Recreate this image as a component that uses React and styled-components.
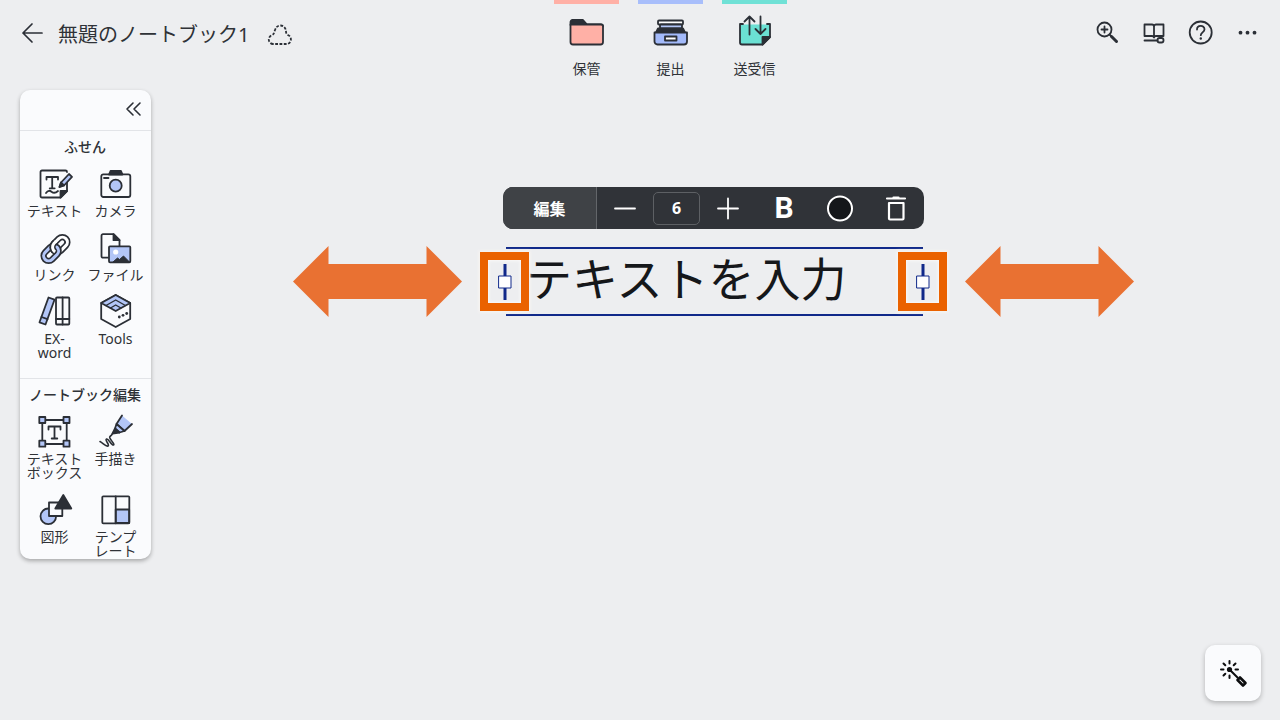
import React from "react";
import styled, { createGlobalStyle, css } from "styled-components";

const INK = "#2b2f36";
const BLUE = "#b3c6f7";
const PAPER = "#fafbfd";

const GlobalStyle = createGlobalStyle`
  *, *::before, *::after { box-sizing: border-box; }
  body {
    margin: 0;
    background: #edeef0;
    color: #2f3237;
    font-family: "Noto Sans", "Noto Sans CJK JP", sans-serif;
  }
  button, input { font: inherit; color: inherit; }
  button { padding: 0; border: 0; background: none; cursor: pointer; }
  svg { display: block; overflow: visible; }
`;

const Page = styled.div`
  display: flex;
  flex-direction: column;
  min-height: 100vh;
`;

const Header = styled.header`
  display: grid;
  grid-template-columns: 554fr auto 493fr;
  height: 90px;
`;

const TitleArea = styled.div`
  display: flex;
  align-items: center;
  height: 70px;
  padding-left: 16px;
`;

const Title = styled.h1`
  margin: 0 15px 0 10px;
  font-size: 20px;
  line-height: 24px;
  font-weight: 400;
  white-space: nowrap;
`;

const IconButton = styled.button`
  display: grid;
  place-items: center;
  width: 32px;
  height: 32px;
`;

const Tabs = styled.nav`
  display: flex;
  gap: 19px;
`;

const Tab = styled.button`
  display: flex;
  flex-direction: column;
  align-items: center;
  width: 65px;
  height: 80px;
  padding-top: 10px;
  border-top: 4px solid ${(p) => p.$color};
  font-size: 14px;
  line-height: 20px;
  white-space: nowrap;
`;

const TabLabel = styled.span`
  margin-top: 9px;
`;

const Actions = styled.div`
  display: flex;
  justify-content: flex-end;
  gap: 15px;
  padding: 17px 16px 0 0;
`;

const Main = styled.main`
  display: flex;
  flex: 1;
  align-items: flex-start;
  padding-left: 20px;
`;

const Palette = styled.aside`
  flex: none;
  width: 131px;
  background: ${PAPER};
  border-radius: 10px;
  box-shadow: 0 2px 4px rgba(0, 0, 0, 0.3);
`;

const PaletteTop = styled.div`
  display: flex;
  justify-content: flex-end;
  padding: 3px 2px 5px;
`;

const Section = styled.section`
  padding: 6px 5px ${(p) => (p.$last ? "1px" : "18px")} 4px;
  border-top: 1px solid #e2e4e8;
`;

const SectionTitle = styled.h2`
  margin: 0 0 11px;
  font-size: 14px;
  line-height: 20px;
  font-weight: 500;
  text-align: center;
  white-space: nowrap;
`;

const ToolGrid = styled.div`
  display: grid;
  grid-template-columns: 1fr 1fr;
  row-gap: 14px;
`;

const Tool = styled.button`
  display: flex;
  flex-direction: column;
  align-items: center;
  gap: 4px;
  font-size: 14px;
  line-height: 14px;
  text-align: center;
  white-space: pre-line;
`;

const Canvas = styled.div`
  display: flex;
  flex: 1;
  flex-direction: column;
  align-items: center;
  gap: 17px;
  padding: 97px 4px 0 0;
`;

const Toolbar = styled.div`
  display: flex;
  align-items: center;
  height: 42px;
  overflow: hidden;
  background: #303338;
  border-radius: 10px;
  color: #fff;
`;

const EditButton = styled.button`
  width: 94px;
  height: 42px;
  background: #3f4246;
  border-right: 1px solid #63666a;
  font-size: 16px;
  font-weight: 700;
`;

const BarButton = styled.button`
  display: grid;
  place-items: center;
  width: 56px;
  height: 42px;
`;

const SizeInput = styled.input`
  width: 47px;
  height: 33px;
  padding: 0;
  background: transparent;
  border: 1px solid #5d6064;
  border-radius: 5px;
  font-size: 16px;
  font-weight: 700;
  text-align: center;
`;

const BoldMark = styled.span`
  font-family: Roboto, "Liberation Sans", sans-serif;
  font-size: 30px;
  line-height: 42px;
  font-weight: 700;
`;

const ObjectRow = styled.div`
  display: flex;
  align-items: center;
  gap: 18px;
`;

const TextFrame = styled.div`
  position: relative;
  width: 467px;
  padding: 0 24px 0 26px;
`;

const TextInput = styled.input`
  display: block;
  width: 100%;
  height: 69px;
  padding: 0 20px 12px 20px;
  background: transparent;
  border: solid #10298a;
  border-width: 2px 0;
  color: #15171a;
  font-size: 46px;
`;

const Handle = styled.span`
  position: absolute;
  top: 5px;
  ${(p) => (p.$side === "left" ? css`left: 0;` : css`right: 0;`)}
  display: grid;
  place-items: center;
  width: 49px;
  height: 59px;
  border: 8px solid #ea6200;
  box-shadow: 0 0 3px 1px #faf6f1, inset 0 0 3px 1px #faf9f8;
`;

const WandButton = styled.button`
  position: fixed;
  right: 19px;
  bottom: 19px;
  display: grid;
  place-items: center;
  width: 56px;
  height: 56px;
  background: ${PAPER};
  border-radius: 10px;
  box-shadow: 0 2px 5px rgba(0, 0, 0, 0.25);
`;

const Svg = ({ w = 32, h = 32, sw = 1.8, color = INK, children }) => (
  <svg
    width={w}
    height={h}
    viewBox={`0 0 ${w} ${h}`}
    fill="none"
    stroke={color}
    strokeWidth={sw}
    strokeLinecap="round"
    strokeLinejoin="round"
    aria-hidden="true"
  >
    {children}
  </svg>
);

const BackIcon = () => (
  <Svg sw={1.7}>
    <path d="M26 14H7M16 5l-9 9 9 9" />
  </Svg>
);

const CloudIcon = () => (
  <Svg w={26} h={26} sw={1.8}>
    <path
      d="M6 22a4.500 4.500 0 0 1-1-8.800C6.500 12.500 7 11.500 7.500 9.500 8.500 5.500 10.500 3.500 13.500 3.500S19 6 19 9.500c0 1.500.5 2.500 2 3.500A4.800 4.800 0 0 1 20.500 22Z"
      strokeDasharray="2.800 1.500"
      strokeLinecap="butt"
    />
  </Svg>
);

const FolderIcon = () => (
  <Svg w={39} h={36}>
    <path d="M3.500 11V8a2 2 0 0 1 2-2h10.500l4 4.500H34a2 2 0 0 1 2 2Z" fill={INK} />
    <path d="M3.500 10.500H34a2 2 0 0 1 2 2V28a2.500 2.500 0 0 1-2.500 2.500H6A2.500 2.500 0 0 1 3.500 28Z" fill="#ffb0a6" />
  </Svg>
);

const TrayIcon = () => (
  <Svg w={39} h={36}>
    <rect x="7" y="6.500" width="25" height="4" rx="1" fill="#fff" />
    <rect x="9" y="10.500" width="22" height="4" rx="1" fill={BLUE} />
    <path d="M7 14.500h25l2 4H5Z" fill={INK} />
    <path d="M3.500 18.500h32.500v9a3 3 0 0 1-3 3H6.500a3 3 0 0 1-3-3Z" fill="#a3bafa" />
    <rect x="14" y="22.500" width="11.500" height="4" fill="#fff" />
  </Svg>
);

const ExchangeIcon = () => (
  <Svg w={39} h={36}>
    <path d="M5 10.500h30V23l-7.500 7.500H7a2 2 0 0 1-2-2Z" fill="#6be0d3" stroke="none" />
    <path d="M8 10H5v18.500a2 2 0 0 0 2 2h20.500L35 23V10h-3" />
    <path d="M27.500 30.500V23H35Z" fill={INK} />
    <path d="M14.500 20.500V2.500M9.500 7.500l5-5 5 5M25.500 2.500V20M20.500 15l5 5 5-5" />
  </Svg>
);

const ZoomInIcon = () => (
  <Svg>
    <circle cx="13.500" cy="12.500" r="7" />
    <path d="M10.500 12.500h6M13.500 9.500v6M18.500 17.500l3 3" />
    <path d="M20.500 19.500l5 5" strokeWidth="3" />
  </Svg>
);

const GuideIcon = () => (
  <Svg>
    <path d="M6.500 7.500H14a2 2 0 0 1 2 2 2 2 0 0 1 2-2h7.500v11.500H18a2 2 0 0 0-2 1.500 2 2 0 0 0-2-1.500H6.500ZM16 9.500v10M6.500 23.500h13" />
    <rect x="19.500" y="21" width="6" height="4.500" rx="2" />
  </Svg>
);

const HelpIcon = () => (
  <Svg>
    <circle cx="15.700" cy="15.500" r="11" />
    <path d="M12 12.500c0-4.800 7.500-4.800 7.500-.3 0 3-3.700 3.300-3.700 6" />
    <circle cx="15.800" cy="21.500" r="1.200" fill={INK} stroke="none" />
  </Svg>
);

const MoreIcon = () => (
  <Svg>
    <g fill={INK} stroke="none">
      <circle cx="8.500" cy="15.700" r="1.900" />
      <circle cx="15.500" cy="15.700" r="1.900" />
      <circle cx="22.500" cy="15.700" r="1.900" />
    </g>
  </Svg>
);

const CollapseIcon = () => (
  <Svg sw={1.600}>
    <path d="M16 10l-6 6 6 6M23 10l-6 6 6 6" />
  </Svg>
);

const NoteIcon = () => (
  <Svg w={41}>
    <path d="M33 9v14l-6.500 6.500H8a1.500 1.500 0 0 1-1.500-1.500V4A1.500 1.500 0 0 1 8 2.500h23.500A1.500 1.500 0 0 1 33 4" />
    <path d="M26.500 29.500v-6.500H33Z" fill={INK} />
    <path d="M12.500 11.500V9h11.500v2.500M18.200 9v11M15.700 20.300h5" />
    <path d="M12 25c2-3 4-2.500 5.500-1.300s4 1.600 6.500-.7" />
    <path d="M25.500 19l1.500-4.500 8-8.500 3 2.800-8 8.700Z" fill={BLUE} />
    <path d="M25.500 19l1.500-4.500 3 3Z" fill={INK} />
  </Svg>
);

const CameraIcon = () => (
  <Svg w={41}>
    <path d="M14 6.500l1.500-3.500h10.500l1.500 3.500Z" fill={INK} />
    <rect x="6.300" y="6.300" width="29" height="22.700" rx="2" />
    <path d="M9 10h4.500" />
    <circle cx="20.700" cy="17.700" r="6" fill={BLUE} />
  </Svg>
);

const LinkIcon = () => (
  <Svg w={41}>
    <g transform="rotate(-45 21.500 17)">
      <rect x="19.200" y="12" width="17" height="10" rx="5" strokeWidth="6.400" />
      <rect x="19.200" y="12" width="17" height="10" rx="5" stroke="#fff" strokeWidth="3" />
      <rect x="6.800" y="12" width="17" height="10" rx="5" strokeWidth="6.400" />
      <rect x="6.800" y="12" width="17" height="10" rx="5" stroke={BLUE} strokeWidth="3" />
      <path d="M19.200 17.500a5 5 0 0 1 5-5.500h2" strokeWidth="6.400" strokeLinecap="butt" />
      <path d="M19.200 18.500a5.500 5.500 0 0 1 5-6.500h3" stroke="#fff" strokeWidth="3" strokeLinecap="butt" />
    </g>
  </Svg>
);

const FileIcon = () => (
  <Svg w={41}>
    <path d="M13 25.700H8a1.500 1.500 0 0 1-1.500-1.500V3.700A1.500 1.500 0 0 1 8 2.200h10.500l6 6V14" />
    <path d="M18.500 2.200v6h6Z" fill={INK} />
    <rect x="14" y="14.300" width="21.300" height="16" rx="1" fill={BLUE} />
    <circle cx="20.700" cy="20" r="2.600" fill="#fff" stroke="none" />
    <path d="M18 30l4.500-4 2 1.500 4-3.500 6 6Z" fill={INK} strokeWidth="1" />
  </Svg>
);

const BooksIcon = () => (
  <Svg w={41}>
    <path d="M14.500 1.500l6 2.200-9 24.800-6-2.200Z" fill={BLUE} />
    <path d="M7.500 21l6 2.200" />
    <rect x="22" y="1.500" width="13.300" height="27" rx="1" />
    <path d="M28.600 1.500v27M22 23h13.300" />
  </Svg>
);

const CubeIcon = () => (
  <Svg w={41}>
    <path d="M20.700-1l14.500 8v16l-14.500 8-14.500-8V7Z" />
    <path d="M20.700-1l14.500 8-14.500 8-14.500-8Z" fill={BLUE} />
    <path d="M11 9.500l9.700-5.500 9.700 5.500M15.500 12l5.200-3 5.200 3" strokeWidth="1.400" />
    <g fill={INK} stroke="none">
      <circle cx="24.300" cy="21" r="1.400" />
      <circle cx="28" cy="19.300" r="1.400" />
      <circle cx="31.700" cy="17.500" r="1.400" />
    </g>
  </Svg>
);

const TextBoxIcon = () => (
  <Svg w={41}>
    <rect x="8.300" y="4" width="24.400" height="24" />
    <g fill={BLUE}>
      <rect x="5.300" y="1" width="6" height="6" />
      <rect x="29.500" y="1" width="6" height="6" />
      <rect x="5.300" y="24.700" width="6" height="6" />
      <rect x="29.500" y="24.700" width="6" height="6" />
    </g>
    <path d="M14.500 13.500v-3h12v3M20.500 10.500v12M17.700 22.500h5.600" />
  </Svg>
);

const DrawIcon = () => (
  <Svg w={41}>
    <path d="M27-.5l10 8.500-7.500 7-8-7Z" fill={BLUE} stroke="none" />
    <path d="M27-.5L21.500 8l8 7 7.500-7" />
    <path d="M21.500 8l-1.500 4.500 4.500 4 5-1.500Z" fill={BLUE} />
    <path d="M20 12.500l-2.500 5 7-1Z" fill={INK} />
    <path d="M5 25.500c3 1.500 6 5.500 8 4.500s-3.500-6-1.500-7 5 7 7 6-5.500-7-3.500-8.500 2-1.500 2.500-3" strokeWidth="1.600" />
  </Svg>
);

const ShapesIcon = () => (
  <Svg w={41}>
    <circle cx="14.300" cy="22.300" r="7.800" fill={BLUE} />
    <rect x="15" y="8.500" width="13.300" height="13.500" fill={PAPER} />
    <path d="M29.300 1l8 13.500h-16Z" fill={INK} />
  </Svg>
);

const TemplateIcon = () => (
  <Svg w={41}>
    <rect x="20.700" y="15.500" width="13.500" height="13.500" fill={BLUE} />
    <rect x="7.300" y="2.300" width="27" height="27" rx="1" />
    <path d="M20.700 2.300v27" />
  </Svg>
);

const MinusIcon = () => (
  <Svg w={24} h={24} color="#fff">
    <path d="M2 12.500h20" />
  </Svg>
);

const PlusIcon = () => (
  <Svg w={24} h={24} color="#fff">
    <path d="M2 12.500h20M12 2.500v20" />
  </Svg>
);

const ColorIcon = () => (
  <Svg w={26} h={26} sw={2} color="#fff">
    <circle cx="13" cy="13.500" r="12" fill="#15171a" />
  </Svg>
);

const TrashIcon = () => (
  <Svg w={24} h={26} sw={2.2} color="#fff">
    <path d="M3 3.500h18M9.500 2.500h5M5 8h14.500v15.500a1 1 0 0 1-1 1H6a1 1 0 0 1-1-1Z" />
  </Svg>
);

const GripIcon = () => (
  <Svg w={15} h={36} sw={3} color="#10298a">
    <path d="M8 0v36" strokeLinecap="butt" />
    <rect x="2" y="12" width="12" height="12" fill="#fff" strokeWidth="1" />
  </Svg>
);

const DoubleArrow = () => (
  <svg width="169" height="71" viewBox="0 0 169 71" aria-hidden="true">
    <path d="M0 35.500L35.500 0v18h98V0L169 35.500 133.500 71V53h-98v18Z" fill="#e97132" />
  </svg>
);

const WandIcon = () => (
  <Svg w={32} h={32} sw={2} color="#0c0d0f">
    <path d="M12.500 4v2.500M12.500 18.500v2.500M4 12.500h2.500M18.500 12.500h2.500M6.500 6.500l1.800 1.800M18.500 6.500l-1.800 1.800M6.500 18.500l1.800-1.800M12.500 12.500l8 8" />
    <circle cx="12.500" cy="12.500" r="2.600" fill="#0c0d0f" stroke="none" />
    <path d="M23 20.500l5.500 5.500-2.500 2.500-5.500-5.500Z" strokeWidth="2.600" />
  </Svg>
);

const tabs = [
  { label: "保管", color: "#ffb0a6", Icon: FolderIcon },
  { label: "提出", color: "#a8befb", Icon: TrayIcon },
  { label: "送受信", color: "#70e1d6", Icon: ExchangeIcon },
];

const actions = [
  { label: "拡大", Icon: ZoomInIcon },
  { label: "表示設定", Icon: GuideIcon },
  { label: "ヘルプ", Icon: HelpIcon },
  { label: "その他", Icon: MoreIcon },
];

const sections = [
  {
    title: "ふせん",
    tools: [
      { label: "テキスト", Icon: NoteIcon },
      { label: "カメラ", Icon: CameraIcon },
      { label: "リンク", Icon: LinkIcon },
      { label: "ファイル", Icon: FileIcon },
      { label: "EX-\nword", Icon: BooksIcon },
      { label: "Tools", Icon: CubeIcon },
    ],
  },
  {
    title: "ノートブック編集",
    tools: [
      { label: "テキスト\nボックス", Icon: TextBoxIcon },
      { label: "手描き", Icon: DrawIcon },
      { label: "図形", Icon: ShapesIcon },
      { label: "テンプ\nレート", Icon: TemplateIcon },
    ],
  },
];

export default function App() {
  return (
    <Page>
      <GlobalStyle />
      <Header>
        <TitleArea>
          <IconButton aria-label="戻る"><BackIcon /></IconButton>
          <Title>無題のノートブック1</Title>
          <IconButton aria-label="同期"><CloudIcon /></IconButton>
        </TitleArea>
        <Tabs>
          {tabs.map(({ label, color, Icon }) => (
            <Tab key={label} $color={color}>
              <Icon />
              <TabLabel>{label}</TabLabel>
            </Tab>
          ))}
        </Tabs>
        <Actions>
          {actions.map(({ label, Icon }) => (
            <IconButton key={label} aria-label={label}><Icon /></IconButton>
          ))}
        </Actions>
      </Header>
      <Main>
        <Palette>
          <PaletteTop>
            <IconButton aria-label="折りたたむ"><CollapseIcon /></IconButton>
          </PaletteTop>
          {sections.map(({ title, tools }, i) => (
            <Section key={title} $last={i === sections.length - 1}>
              <SectionTitle>{title}</SectionTitle>
              <ToolGrid>
                {tools.map(({ label, Icon }) => (
                  <Tool key={label}>
                    <Icon />
                    <span>{label}</span>
                  </Tool>
                ))}
              </ToolGrid>
            </Section>
          ))}
        </Palette>
        <Canvas>
          <Toolbar role="toolbar">
            <EditButton>編集</EditButton>
            <BarButton aria-label="小さく"><MinusIcon /></BarButton>
            <SizeInput aria-label="文字サイズ" defaultValue="6" />
            <BarButton aria-label="大きく"><PlusIcon /></BarButton>
            <BarButton aria-label="太字"><BoldMark>B</BoldMark></BarButton>
            <BarButton aria-label="文字色"><ColorIcon /></BarButton>
            <BarButton aria-label="削除"><TrashIcon /></BarButton>
          </Toolbar>
          <ObjectRow>
            <DoubleArrow />
            <TextFrame>
              <TextInput aria-label="テキストボックス" defaultValue="テキストを入力" />
              <Handle $side="left"><GripIcon /></Handle>
              <Handle $side="right"><GripIcon /></Handle>
            </TextFrame>
            <DoubleArrow />
          </ObjectRow>
        </Canvas>
      </Main>
      <WandButton aria-label="ツール"><WandIcon /></WandButton>
    </Page>
  );
}
